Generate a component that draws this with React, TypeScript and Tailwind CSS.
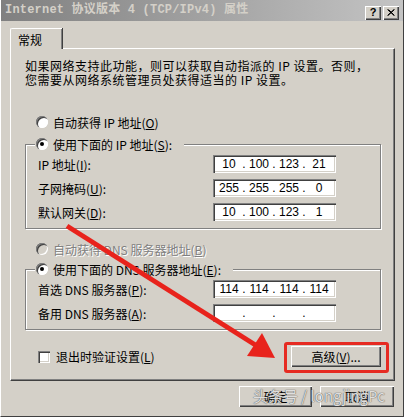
import React, { Fragment } from "react";

const sunk =
  "shadow-[inset_1px_1px_0_#808080,inset_2px_2px_0_#404040,inset_-1px_-1px_0_#ffffff,inset_-2px_-2px_0_#d4d0c8]";
const raised =
  "shadow-[inset_1px_1px_0_#ffffff,inset_-1px_-1px_0_#404040,inset_-2px_-2px_0_#808080]";

function Radio({ checked, disabled }: { checked?: boolean; disabled?: boolean }) {
  return (
    <span
      className={`inline-flex w-[12px] h-[12px] rounded-full items-center justify-center shrink-0 shadow-[inset_1px_1px_0_#808080,inset_2px_2px_0_#404040,inset_-1px_-1px_0_#ffffff] ${
        disabled ? "bg-[#d4d0c8]" : "bg-white"
      }`}
    >
      {checked && <span className="w-[4px] h-[4px] rounded-full bg-black" />}
    </span>
  );
}

function IpInput({ values }: { values: string[] }) {
  return (
    <div
      className={`w-[123px] h-[18px] bg-white flex items-center pl-[4px] font-['Liberation_Sans',sans-serif] text-[12px] leading-none text-black ${sunk}`}
    >
      {values.map((v, i) => (
        <Fragment key={i}>
          {i > 0 && <span className="w-[6px] text-center">.</span>}
          <span className="w-[24px] text-center">{v}</span>
        </Fragment>
      ))}
    </div>
  );
}

function Acc({ k }: { k: string }) {
  return (
    <span>
      (<span className="underline underline-offset-[1px]">{k}</span>)
    </span>
  );
}

function Row({ label, values }: { label: React.ReactNode; values: string[] }) {
  return (
    <div className="flex items-center h-[18px]">
      <div className="w-[187px] pl-[12px]">{label}</div>
      <IpInput values={values} />
    </div>
  );
}

export default function App() {
  return (
    <div className="relative w-[404px] h-[417px] overflow-hidden bg-[#d4d0c8] font-['Noto_Sans_CJK_SC','Liberation_Sans',sans-serif] text-[12px] leading-[13px] text-black border-l border-l-white border-r border-r-[#404040] border-b border-b-[#404040]">
      {/* title bar */}
      <div className="h-[21px] flex items-center justify-between bg-gradient-to-r from-[#808080] to-[#c4c4c4] pl-[4px] pr-[4px]">
        <span className="font-['Liberation_Mono','Noto_Sans_CJK_SC',monospace] font-bold text-[12px] text-[#d4d0c8] tracking-[0.2px]">
          Internet 协议版本 4 (TCP/IPv4) 属性
        </span>
        <div className="flex gap-[2px] mt-[4px]">
          <div className={`w-[16px] h-[14px] bg-[#d4d0c8] flex items-center justify-center font-['Liberation_Sans',sans-serif] font-bold text-[11px] leading-none ${raised}`}>
            ?
          </div>
          <div className={`w-[16px] h-[14px] bg-[#d4d0c8] flex items-center justify-center ${raised}`}>
            <svg width="8" height="7" viewBox="0 0 8 7">
              <path d="M0.5 0.5 L7 6.5 M1.5 0.5 L7.5 6.5 M7 0.5 L0.5 6.5 M7.5 0.5 L1 6.5" stroke="#000" strokeWidth="1" fill="none" />
            </svg>
          </div>
        </div>
      </div>

      {/* tab */}
      <div className="ml-[9px] mt-[7px] w-[385px]">
        <div className="relative z-10 -mb-[1px] w-[52px] h-[21px] bg-[#d4d0c8] border-t border-l border-white rounded-tl-[2px] shadow-[inset_-1px_0_0_#808080,1px_0_0_#404040] flex items-center pl-[7px] pt-[1px]">
          常规
        </div>

        {/* panel */}
        <div className="h-[333px] border-t border-l border-white border-r border-r-[#404040] border-b border-b-[#404040] shadow-[inset_-1px_-1px_0_#808080] pl-[14px] pt-[10px]">
          <p className="h-[27px] leading-[14px] tracking-[0.5px]">
            如果网络支持此功能，则可以获取自动指派的 IP 设置。否则，
            <br />
            您需要从网络系统管理员处获得适当的 IP 设置。
          </p>

          <div className="mt-[28px] h-[16px] flex items-center pl-[11px] gap-[5px]">
            <Radio />
            <span>
              自动获得 IP 地址<Acc k="O" />
            </span>
          </div>

          {/* group 1 */}
          <div className="mt-[14px] w-[356px] h-[85px] border border-[#808080] shadow-[inset_1px_1px_0_#ffffff,1px_1px_0_#ffffff]">
            <div className="-mt-[9px] ml-[9px] w-fit h-[16px] bg-[#d4d0c8] flex items-center gap-[5px] pl-[1px] pr-[12px]">
              <Radio checked />
              <span>
                使用下面的 IP 地址<Acc k="S" />:
              </span>
            </div>
            <div className="mt-[3px] flex flex-col gap-[6px]">
              <Row label={<span>IP 地址<Acc k="I" />:</span>} values={["10", "100", "123", "21"]} />
              <Row label={<span>子网掩码<Acc k="U" />:</span>} values={["255", "255", "255", "0"]} />
              <Row label={<span>默认网关<Acc k="D" />:</span>} values={["10", "100", "123", "1"]} />
            </div>
          </div>

          <div className="mt-[12px] h-[16px] flex items-center pl-[11px] gap-[5px]">
            <Radio disabled />
            <span className="text-[#808080] [text-shadow:1px_1px_0_#ffffff]">
              自动获得 DNS 服务器地址<Acc k="B" />
            </span>
          </div>

          {/* group 2 */}
          <div className="mt-[12px] w-[356px] h-[61px] border border-[#808080] shadow-[inset_1px_1px_0_#ffffff,1px_1px_0_#ffffff]">
            <div className="-mt-[9px] ml-[9px] w-fit h-[16px] bg-[#d4d0c8] flex items-center gap-[5px] pl-[1px] pr-[12px]">
              <Radio checked />
              <span>
                使用下面的 DNS 服务器地址<Acc k="E" />:
              </span>
            </div>
            <div className="mt-[3px] flex flex-col gap-[6px]">
              <Row label={<span>首选 DNS 服务器<Acc k="P" />:</span>} values={["114", "114", "114", "114"]} />
              <Row label={<span>备用 DNS 服务器<Acc k="A" />:</span>} values={["", "", "", ""]} />
            </div>
          </div>

          <div className="mt-[16px] h-[21px] flex items-center">
            <div className="flex items-center gap-[6px] pl-[13px]">
              <span className={`w-[12px] h-[12px] bg-white ${sunk}`} />
              <span>
                退出时验证设置<Acc k="L" />
              </span>
            </div>
            <div className={`ml-auto mr-[13px] w-[90px] h-[21px] bg-[#d4d0c8] flex items-center justify-center ${raised}`}>
              高级<Acc k="V" />...
            </div>
          </div>
        </div>
      </div>

      {/* dialog buttons */}
      <div className="mt-[5px] flex justify-end gap-[8px] pr-[9px]">
        <div className={`w-[73px] h-[21px] bg-[#d4d0c8] flex items-center justify-center ${raised}`}>确定</div>
        <div className={`w-[74px] h-[21px] bg-[#d4d0c8] flex items-center justify-center ${raised}`}>取消</div>
      </div>

      {/* annotations */}
      <svg className="absolute left-0 top-0 pointer-events-none" width="404" height="417" viewBox="0 0 404 417">
        <line x1="66" y1="226" x2="256" y2="346" stroke="#e8231c" strokeWidth="5" />
        <polygon points="274,358 261,333 246,356" fill="#e8231c" />
      </svg>
      <div className="absolute left-[283px] top-[342px] w-[105px] h-[31px] border-[3px] border-[#e62b22] rounded-[3px] pointer-events-none" />
      <div className="absolute left-[252px] top-[386px] font-['Noto_Sans_CJK_SC',sans-serif] text-[15px] leading-[20px] text-white/80 [text-shadow:0_0_1px_#555,0_0_1px_#555] whitespace-nowrap pointer-events-none">
        头条号 / longjingPc
      </div>
    </div>
  );
}
